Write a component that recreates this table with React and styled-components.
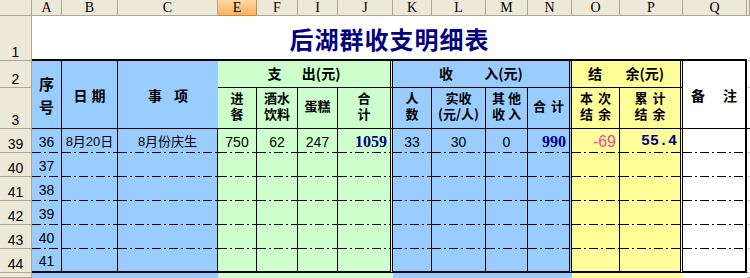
import React from 'react';
import styled, { createGlobalStyle } from 'styled-components';

const BLUE = '#99CCFF';
const GREEN = '#CCFFCC';
const YELLOW = '#FFFF99';
const WHITE = '#FFFFFF';
const NAVY = '#000080';
const HDR = '#ECE9D8';
const HDR_LINE = '#ACA899';
const GRID = '#C8C8C8';

const GlobalStyle = createGlobalStyle`
  *, *::before, *::after { box-sizing: border-box; }
  html, body { margin: 0; padding: 0; background: #fff; }
  body { font-family: "Liberation Sans", "Noto Sans CJK SC", sans-serif; }
`;

const edgeCss = (edge) => {
  switch (edge) {
    case 'double': return '3px double #000';
    case 'thick': return '2px solid #000';
    case 'none': return 'none';
    default: return '1px solid #000';
  }
};

const DASH_DOT =
  'repeating-linear-gradient(90deg, #000 0 9px, transparent 9px 12px, #000 12px 14px, transparent 14px 17px)';

const Sheet = styled.div`
  display: grid;
  grid-template-columns: 32px 30px 56px 100px 39px 41px 40px 55px 39px 54px 42px 44px 48px 63px 64px 1fr;
  grid-template-rows: 16px 45px 27px 41px repeat(6, 24px) 1fr;
  width: 750px;
  height: 278px;
  overflow: hidden;
  background: #fff;
`;

const Corner = styled.div`
  background: ${HDR};
  border-right: 1px solid ${HDR_LINE};
  border-bottom: 1px solid ${HDR_LINE};
`;

const ColHead = styled.div`
  display: flex;
  align-items: center;
  justify-content: center;
  background: ${(p) => (p.$active ? 'linear-gradient(#FCD9A3, #F7B25F)' : HDR)};
  border-right: 1px solid ${(p) => (p.$active ? '#C98A3C' : HDR_LINE)};
  border-bottom: 1px solid ${(p) => (p.$active ? '#C98A3C' : HDR_LINE)};
  font-family: "Liberation Serif", serif;
  font-size: 14px;
  line-height: 1;
  color: #000;
`;

const RowHead = styled.div`
  display: flex;
  align-items: flex-end;
  justify-content: center;
  padding-bottom: 1px;
  background: ${HDR};
  border-right: 1px solid ${HDR_LINE};
  border-bottom: 1px solid ${HDR_LINE};
  font-family: "Liberation Sans", sans-serif;
  font-size: 14px;
  line-height: 1;
  color: #000;
`;

const Title = styled.div`
  grid-column: span 14;
  display: flex;
  align-items: center;
  justify-content: center;
  padding-top: 2px;
  border-bottom: 2px solid #000;
  font-family: "Noto Sans CJK SC", sans-serif;
  font-weight: 700;
  font-size: 24px;
  letter-spacing: 1px;
  color: ${NAVY};
`;

const Rest = styled.div`
  background: #fff;
  border-bottom: 1px solid ${(p) => (p.$dark ? '#000' : GRID)};
`;

const HeadCell = styled.div`
  grid-row: span ${(p) => p.$rs || 1};
  grid-column: span ${(p) => p.$cs || 1};
  display: flex;
  align-items: center;
  justify-content: center;
  text-align: center;
  white-space: pre;
  background: ${(p) => p.$bg};
  border-right: ${(p) => edgeCss(p.$edge)};
  border-bottom: 1px solid #000;
  padding-bottom: ${(p) => p.$pb || 0}px;
  padding-left: ${(p) => p.$ls || 0}px;
  font-family: "Noto Sans CJK SC", sans-serif;
  font-weight: 700;
  font-size: ${(p) => p.$fs || 14}px;
  line-height: ${(p) => p.$lh || 16}px;
  letter-spacing: ${(p) => p.$ls || 0}px;
  color: #000;
`;

const toneCss = {
  plain: 'font-family: "Liberation Sans", "Noto Sans CJK SC", sans-serif; font-size: 14px; color: #000;',
  text: 'font-family: "Liberation Sans", "Noto Sans CJK SC", sans-serif; font-size: 13px; color: #000;',
  total: `font-family: "Liberation Serif", serif; font-weight: 700; font-size: 16px; color: ${NAVY};`,
  neg: 'font-family: "Liberation Sans", sans-serif; font-size: 16px; color: #F0489C;',
  mono: `font-family: "Liberation Mono", monospace; font-weight: 700; font-size: 15px; color: ${NAVY};`,
};

const DataCell = styled.div`
  display: flex;
  align-items: center;
  justify-content: ${(p) => (p.$right ? 'flex-end' : 'center')};
  padding: 1px ${(p) => (p.$right ? 3 : 0)}px 0 0;
  background: ${(p) => (p.$last ? p.$bg : `${DASH_DOT} left bottom / 100% 1px no-repeat, ${p.$bg}`)};
  border-right: ${(p) => edgeCss(p.$edge)};
  border-bottom: ${(p) => (p.$last ? '2px solid #000' : 'none')};
  line-height: 1;
  white-space: nowrap;
  ${(p) => toneCss[p.$tone || 'plain']}
`;

const Tail = styled.div`
  background: ${(p) => p.$bg};
`;

const columns = [
  { key: 'A', bg: BLUE, edge: 'thin' },
  { key: 'B', bg: BLUE, edge: 'thin' },
  { key: 'C', bg: BLUE, edge: 'thin' },
  { key: 'E', bg: GREEN, edge: 'thin' },
  { key: 'F', bg: GREEN, edge: 'thin' },
  { key: 'I', bg: GREEN, edge: 'thin' },
  { key: 'J', bg: GREEN, edge: 'double' },
  { key: 'K', bg: BLUE, edge: 'thin' },
  { key: 'L', bg: BLUE, edge: 'thin' },
  { key: 'M', bg: BLUE, edge: 'thin' },
  { key: 'N', bg: BLUE, edge: 'double' },
  { key: 'O', bg: YELLOW, edge: 'thin' },
  { key: 'P', bg: YELLOW, edge: 'double' },
  { key: 'Q', bg: WHITE, edge: 'thick' },
];

const subHeads = [
  { text: '进\n餐', bg: GREEN, edge: 'thin' },
  { text: '酒水\n饮料', bg: GREEN, edge: 'thin' },
  { text: '蛋糕', bg: GREEN, edge: 'thin' },
  { text: '合\n计', bg: GREEN, edge: 'double' },
  { text: '人\n数', bg: BLUE, edge: 'thin' },
  { text: '实收\n(元/人)', bg: BLUE, edge: 'thin' },
  { text: '其他\n收入', bg: BLUE, edge: 'thin', ls: 3 },
  { text: '合计', bg: BLUE, edge: 'double', ls: 5 },
  { text: '本次\n结余', bg: YELLOW, edge: 'thin', ls: 5 },
  { text: '累计\n结余', bg: YELLOW, edge: 'double', ls: 5 },
];

const firstRow = {
  A: { v: '36' },
  B: { v: '8月20日', tone: 'text' },
  C: { v: '8月份庆生', tone: 'text' },
  E: { v: '750' },
  F: { v: '62' },
  I: { v: '247' },
  J: { v: '1059', tone: 'total', right: true },
  K: { v: '33' },
  L: { v: '30' },
  M: { v: '0' },
  N: { v: '990', tone: 'total', right: true },
  O: { v: '-69', tone: 'neg', right: true },
  P: { v: '55.4', tone: 'mono', right: true },
};

const dataRows = [0, 1, 2, 3, 4, 5].map((i) =>
  i === 0 ? firstRow : { A: { v: String(36 + i) } }
);

export default function App() {
  return (
    <>
      <GlobalStyle />
      <Sheet>
        <Corner />
        {columns.map((c) => (
          <ColHead key={c.key} $active={c.key === 'E'}>{c.key}</ColHead>
        ))}
        <ColHead />

        <RowHead>1</RowHead>
        <Title>后湖群收支明细表</Title>
        <Rest />

        <RowHead>2</RowHead>
        <HeadCell $rs={2} $bg={BLUE} $edge="thin" $fs={15} $lh={23}>{'序\n号'}</HeadCell>
        <HeadCell $rs={2} $bg={BLUE} $edge="thin" $ls={4}>日期</HeadCell>
        <HeadCell $rs={2} $bg={BLUE} $edge="none" $ls={12}>事项</HeadCell>
        <HeadCell $cs={4} $bg={GREEN} $edge="double" $pb={2}>{'支\u3000  出(元)'}</HeadCell>
        <HeadCell $cs={4} $bg={BLUE} $edge="double" $pb={2}>{'收\u3000\u3000 入(元)'}</HeadCell>
        <HeadCell $cs={2} $bg={YELLOW} $edge="double" $pb={2}>{'结\u3000   余(元)'}</HeadCell>
        <HeadCell $rs={2} $bg={WHITE} $edge="thick" $ls={2}>{'备\u3000注'}</HeadCell>
        <Rest />

        <RowHead>3</RowHead>
        {subHeads.map((h) => (
          <HeadCell key={h.text} $bg={h.bg} $edge={h.edge} $fs={13} $ls={h.ls} $pb={5}>
            {h.text}
          </HeadCell>
        ))}
        <Rest $dark />

        {dataRows.map((row, i) => (
          <React.Fragment key={i}>
            <RowHead>{39 + i}</RowHead>
            {columns.map((c) => {
              const cell = row[c.key] || {};
              return (
                <DataCell
                  key={c.key}
                  $bg={c.bg}
                  $edge={c.edge}
                  $last={i === 5}
                  $tone={cell.tone}
                  $right={cell.right}
                >
                  {cell.v || ''}
                </DataCell>
              );
            })}
            <Rest />
          </React.Fragment>
        ))}

        <RowHead />
        {columns.map((c) => (
          <Tail key={c.key} $bg={c.bg} />
        ))}
        <Rest />
      </Sheet>
    </>
  );
}
